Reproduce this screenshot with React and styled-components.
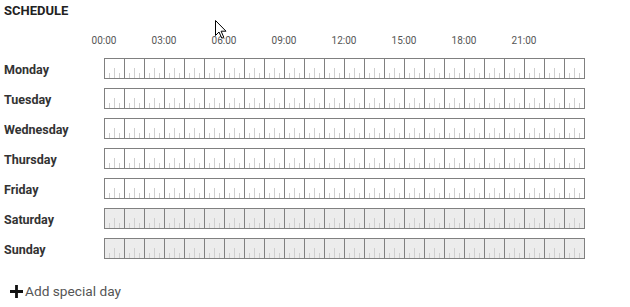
import React from "react";
import styled, { createGlobalStyle } from "styled-components";

const Global = createGlobalStyle`
  html, body { margin: 0; padding: 0; background: #fff; }
  body { font-family: Roboto, "Liberation Sans", Arial, sans-serif; }
`;

const Page = styled.div`
  position: relative;
  width: 630px;
  height: 307px;
  padding: 4px 4px 0 4px;
  box-sizing: border-box;
  overflow: hidden;
`;

const Title = styled.div`
  font-size: 13px;
  line-height: 14px;
  font-weight: 700;
  color: #222;
`;

const Header = styled.div`
  display: flex;
  margin: 17px 0 0 70px;
  height: 12px;
`;

const TimeLabel = styled.div`
  width: 60px;
  text-align: center;
  font-size: 10px;
  line-height: 12px;
  color: #555;
`;

const Rows = styled.div`
  margin-top: 7px;
  display: flex;
  flex-direction: column;
`;

const Row = styled.div`
  display: grid;
  grid-template-columns: 100px 481px;
  height: 30px;
  align-items: start;
`;

const DayLabel = styled.div`
  margin-top: 5px;
  line-height: 21px;
  font-size: 12.5px;
  font-weight: 700;
  color: #333;
`;

const Bar = styled.div`
  margin-top: 4px;
  display: flex;
  height: 21px;
  box-sizing: border-box;
  border: 1px solid #808080;
  border-left: none;
  background: ${(p) => (p.$off ? "#ececec" : "#fff")};
`;

const Cell = styled.div`
  width: 20px;
  flex: none;
  box-sizing: border-box;
  border-left: 1px solid #808080;
  display: flex;
  align-items: flex-end;
  padding-left: 4px;
  gap: 4px;
`;

const Tick = styled.div`
  width: 1px;
  height: ${(p) => (p.$tall ? 10 : 5)}px;
  background: #cfcfcf;
`;

const AddButton = styled.div`
  margin: 17px 0 0 6px;
  display: flex;
  align-items: center;
  gap: 2px;
  height: 20px;
  font-size: 13.7px;
  color: #555;
  cursor: pointer;
`;

const Cursor = styled.svg`
  position: absolute;
  left: 215px;
  top: 20px;
`;

const days = [
  ["Monday", false],
  ["Tuesday", false],
  ["Wednesday", false],
  ["Thursday", false],
  ["Friday", false],
  ["Saturday", true],
  ["Sunday", true],
];

const times = ["00:00", "03:00", "06:00", "09:00", "12:00", "15:00", "18:00", "21:00"];

export default function App() {
  return (
    <Page>
      <Global />
      <Title>SCHEDULE</Title>
      <Header>
        {times.map((t) => (
          <TimeLabel key={t}>{t}</TimeLabel>
        ))}
      </Header>
      <Rows>
        {days.map(([d, off]) => (
          <Row key={d}>
            <DayLabel>{d}</DayLabel>
            <Bar $off={off}>
              {Array.from({ length: 24 }).map((_, i) => (
                <Cell key={i}>
                  <Tick />
                  <Tick $tall />
                  <Tick />
                </Cell>
              ))}
            </Bar>
          </Row>
        ))}
      </Rows>
      <AddButton>
        <svg width="13" height="13" viewBox="0 0 13 13">
          <path d="M6.5 0V13M0 6.5H13" stroke="#111" strokeWidth="2.8" />
        </svg>
        Add special day
      </AddButton>
      <Cursor width="14" height="20" viewBox="0 0 14 20">
        <path
          d="M0.5 0.5 L0.5 15.5 L4 12 L6.8 18.2 L8.8 17.3 L6.1 11.2 L11 11.2 Z"
          fill="#fff"
          stroke="#000"
          strokeWidth="1"
          strokeLinejoin="miter"
        />
      </Cursor>
    </Page>
  );
}
